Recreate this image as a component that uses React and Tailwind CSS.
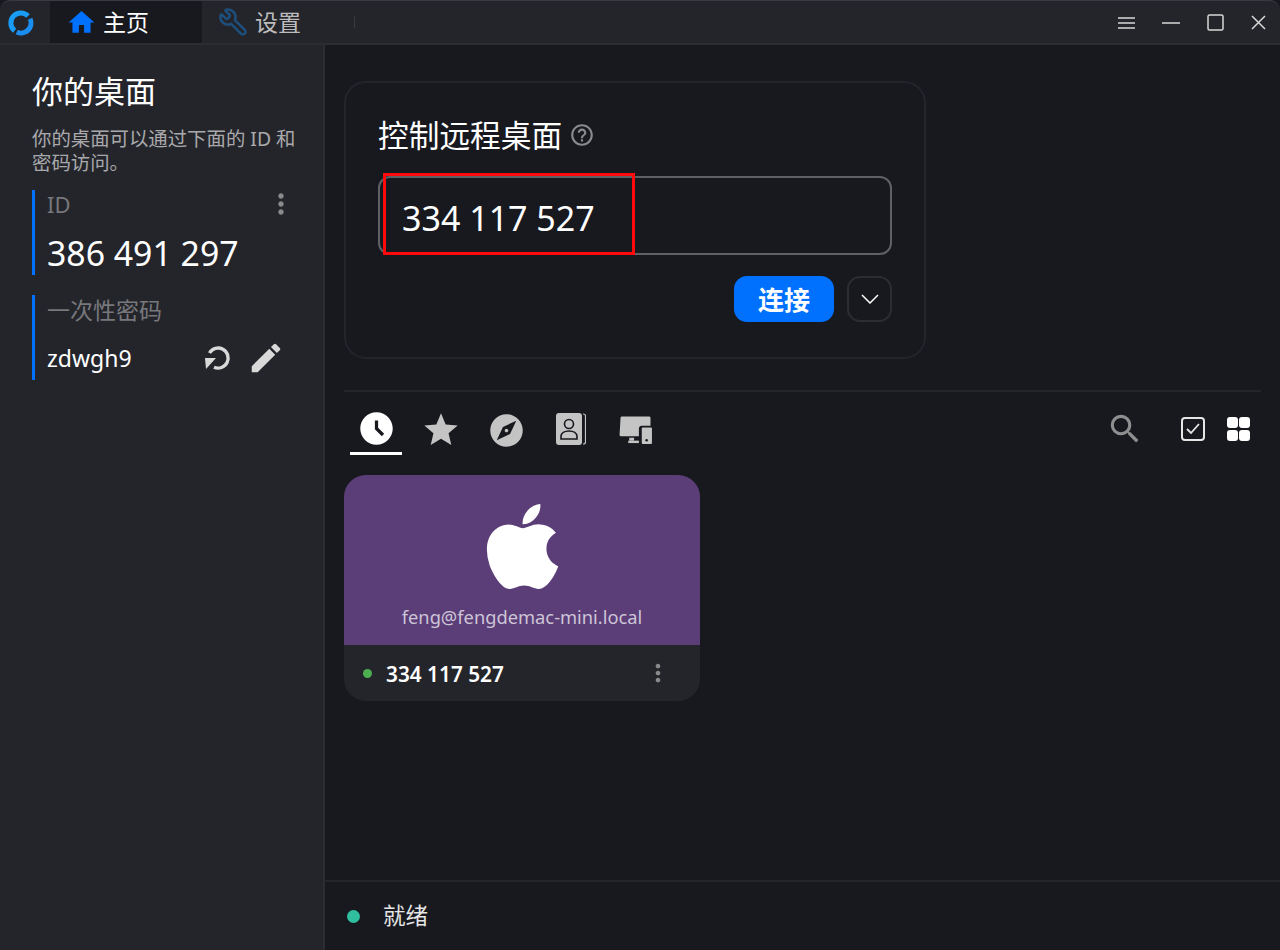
import { MdHome, MdAccessTimeFilled, MdStar, MdExplore, MdSearch, MdEdit, MdMoreVert, MdHelpOutline } from 'react-icons/md';
import { FaApple } from 'react-icons/fa';
import { Wrench } from 'lucide-react';

const font = { fontFamily: '"Noto Sans", "Noto Sans CJK SC", sans-serif' };

function Logo() {
  return (
    <svg width="28" height="28" viewBox="0 0 28 28" fill="none">
      <path d="M7.600 21.700 A10 10 0 1 1 21 6.900" stroke="#1a9cf5" strokeWidth="5" />
      <path d="M23.100 9.800 A10 10 0 0 1 9.800 23.100" stroke="#1a8df0" strokeWidth="5" />
    </svg>
  );
}

function RefreshIcon() {
  return (
    <svg width="28" height="28" viewBox="0 0 28 28" fill="none">
      <path d="M5.500 9 A10 10 0 1 1 10 23.200" stroke="#d9d9d9" strokeWidth="3.400" />
      <path d="M1 14 H12 L2 25 Z" fill="#d9d9d9" />
    </svg>
  );
}

function ContactIcon() {
  return (
    <svg width="30" height="34" viewBox="0 0 30 34">
      <rect x="0" y="1" width="26" height="32" rx="3" fill="#c4c4c4" />
      <path d="M27 2 h0.500 a2 2 0 0 1 2 2 v26 a2 2 0 0 1 -2 2 h-0.500" stroke="#c4c4c4" strokeWidth="1.200" fill="none" />
      <circle cx="13" cy="12" r="4.500" fill="none" stroke="#18191f" strokeWidth="1.600" />
      <path d="M5 27 v-2.500 c0-3.500 3.500-5.500 8-5.500 s8 2 8 5.500 v2.500 z" fill="none" stroke="#18191f" strokeWidth="1.600" />
    </svg>
  );
}

function DevicesIcon() {
  return (
    <svg width="34" height="29" viewBox="0 0 34 30">
      <path d="M1 2 a1.500 1.500 0 0 1 1.500-1.500 h28 a1.500 1.500 0 0 1 1.500 1.500 v8 h-9 a3 3 0 0 0 -3 3 v8 h-19 a1.500 1.500 0 0 1 -1 -1.500 z" fill="#c4c4c4" />
      <rect x="10" y="22.500" width="5" height="3" fill="#c4c4c4" />
      <rect x="9" y="25.500" width="11" height="2.500" fill="#c4c4c4" />
      <path d="M23 13 a1 1 0 0 1 1-1 h8.500 a1 1 0 0 1 1 1 v15 a1 1 0 0 1 -1 1 h-8.500 a1 1 0 0 1 -1 -1 z" fill="#c4c4c4" />
      <circle cx="28" cy="25" r="1.300" fill="#18191f" />
    </svg>
  );
}

function WindowButtons() {
  return (
    <div className="ml-auto flex items-center gap-[27px] pr-[14px] pt-[1px] text-[#d8d8d8]">
      <svg width="17" height="14" viewBox="0 0 17 14" stroke="currentColor" strokeWidth="1.500">
        <path d="M0 2h17M0 7h17M0 12h17" />
      </svg>
      <svg width="18" height="4" viewBox="0 0 18 4" stroke="currentColor" strokeWidth="1.500">
        <path d="M0 2h18" />
      </svg>
      <svg width="17" height="17" viewBox="0 0 17 17" fill="none" stroke="currentColor" strokeWidth="1.500">
        <rect x="1" y="1" width="15" height="15" rx="1.500" />
      </svg>
      <svg width="15" height="15" viewBox="0 0 15 15" stroke="currentColor" strokeWidth="1.500">
        <path d="M1 1l13 13M14 1L1 14" />
      </svg>
    </div>
  );
}

function Sidebar() {
  return (
    <aside className="w-[325px] shrink-0 border-r-2 border-[#2c2d33] bg-[#24252b] pl-[32px] pr-[28px] pt-[25px]">
      <h1 className="text-[31px] leading-[42px] text-white">你的桌面</h1>
      <div className="mt-[15px] -mr-[6px] text-[19.400px] leading-[24px] text-[#a9a9ab]">
        <p>你的桌面可以通过下面的 ID 和</p>
        <p>密码访问。</p>
      </div>
      <div className="mt-[15px] flex h-[85px] border-l-[3px] border-[#0071ff] pl-[12px]">
        <div className="flex-1">
          <div className="text-[22px] leading-[28px] text-[#77787c]">ID</div>
          <div className="mt-[15px] text-[33.800px] leading-[40px] text-white">386 491 297</div>
        </div>
        <MdMoreVert className="-mr-[2px] -mt-[2px] text-[#8a8a8d]" size={32} />
      </div>
      <div className="mt-[20px] flex h-[85px] flex-col border-l-[3px] border-[#0071ff] pl-[12px]">
        <div className="text-[23px] leading-[30px] text-[#77787c]">一次性密码</div>
        <div className="mt-[14px] flex items-center">
          <span className="flex-1 text-[23px] leading-[30px] text-white">zdwgh9</span>
          <RefreshIcon />
          <MdEdit className="ml-[15px] mr-[10px] text-[#d9d9d9]" size={38} />
        </div>
      </div>
    </aside>
  );
}

function ConnectPanel() {
  return (
    <section className="relative h-[278px] w-[582px] rounded-[22px] border-2 border-[#24252b] pl-[32px] pr-[32px] pt-[30px]">
      <div className="flex items-center gap-[7px]">
        <h2 className="text-[30.700px] leading-[44px] text-white">控制远程桌面</h2>
        <MdHelpOutline className="text-[#8a8a8d]" size={26} />
      </div>
      <div className="mt-[19px] flex h-[79px] items-center rounded-[12px] border-2 border-[#5f6064] pl-[22px] pt-[4px]">
        <span className="text-[34px] leading-[44px] text-white">334 117 527</span>
      </div>
      <div className="mt-[21px] flex justify-end gap-[13px]">
        <button className="h-[46px] w-[100px] rounded-[13px] bg-[#0071ff] text-[26px] font-bold leading-[48px] text-white">连接</button>
        <button className="flex h-[46px] w-[45px] items-center justify-center rounded-[13px] border-2 border-[#2c2d33] text-white">
          <svg width="18" height="10" viewBox="0 0 18 10" fill="none" stroke="currentColor" strokeWidth="1.500">
            <path d="M1 1l8 8 8-8" />
          </svg>
        </button>
      </div>
      {/* annotation drawn over the screenshot */}
      <div className="absolute left-[37px] top-[90px] h-[82px] w-[252px] border-[3px] border-[#ff0a0a]" />
    </section>
  );
}

function PeerTabs() {
  return (
    <div className="flex h-[66px] items-start pt-[21px]">
      <div className="ml-[6px] flex h-[42px] w-[52px] flex-col items-center border-b-[3px] border-white">
        <MdAccessTimeFilled className="-mt-[4px] text-white" size={39} />
      </div>
      <MdStar className="ml-[19px] -mt-[3px] text-[#c4c4c4]" size={40} />
      <MdExplore className="ml-[26px] -mt-[2px] text-[#c4c4c4]" size={39} />
      <div className="ml-[30px] -mt-[1px]"><ContactIcon /></div>
      <div className="ml-[33px] mt-[3px]"><DevicesIcon /></div>
      <MdSearch className="ml-auto -mt-[3px] text-[#8f8f91]" size={38} />
      <div className="ml-[37px] mt-[4px] flex h-[24px] w-[24px] items-center justify-center rounded-[4px] border-2 border-[#e6e6e6]">
        <svg width="14" height="12" viewBox="0 0 14 12" fill="none" stroke="#e6e6e6" strokeWidth="1.800">
          <path d="M1 6l4 4 8-9" />
        </svg>
      </div>
      <div className="ml-[22px] mr-[11px] mt-[4px] grid grid-cols-2 gap-[1.500px]">
        <span className="h-[11px] w-[11px] rounded-[3px] bg-white" />
        <span className="h-[11px] w-[11px] rounded-[3px] bg-white" />
        <span className="h-[11px] w-[11px] rounded-[3px] bg-white" />
        <span className="h-[11px] w-[11px] rounded-[3px] bg-white" />
      </div>
    </div>
  );
}

function PeerCard() {
  return (
    <div className="w-[356px] overflow-hidden rounded-[22px] bg-[#24252b]">
      <div className="flex h-[170px] flex-col items-center bg-[#5b3d78] pt-[23px]">
        <FaApple className="text-white" size={97} />
        <div className="mt-[8px] text-[18.300px] leading-[28px] text-[#cdc5d6]">feng@fengdemac-mini.local</div>
      </div>
      <div className="flex h-[56px] items-center pl-[19px] pr-[28px]">
        <span className="h-[9px] w-[9px] rounded-full bg-[#4caf50]" />
        <span className="ml-[14px] flex-1 pt-[3px] text-[20.800px] font-semibold text-white">334 117 527</span>
        <MdMoreVert className="text-[#8a8a8d]" size={28} />
      </div>
    </div>
  );
}

export default function App() {
  return (
    <div className="flex h-[950px] w-[1280px] flex-col overflow-hidden bg-[#18191f]" style={font}>
      <header className="flex h-[45px] shrink-0 items-center rounded-t-[10px] border-b-2 border-t border-[#2c2d33] border-t-[#3a3b42] bg-[#24252b]">
        <div className="flex w-[50px] justify-center pr-[8px] pt-[1px]"><Logo /></div>
        <div className="flex h-full w-[152px] items-center bg-[#18191f] pl-[16px]">
          <MdHome className="text-[#0071ff]" size={31} />
          <span className="ml-[6px] text-[23px] text-white">主页</span>
        </div>
        <div className="flex h-full items-center pl-[16px]">
          <Wrench className="-scale-x-100 text-[#1d4f7c]" size={30} strokeWidth={2} />
          <span className="ml-[7px] text-[23px] text-[#bcbcbd]">设置</span>
        </div>
        <span className="ml-[53px] h-[12px] w-px bg-[#3a3b40]" />
        <WindowButtons />
      </header>
      <div className="flex min-h-0 flex-1">
        <Sidebar />
        <main className="flex min-w-0 flex-1 flex-col">
          <div className="flex-1 pl-[19px] pr-[19px] pt-[36px]">
            <ConnectPanel />
            <div className="mt-[31px] border-t-2 border-[#24252b]">
              <PeerTabs />
              <div className="mt-[17px]"><PeerCard /></div>
            </div>
          </div>
          <footer className="flex h-[70px] items-center border-t-2 border-[#24252b] pl-[22px]">
            <span className="h-[13px] w-[13px] rounded-full bg-[#2fbf9f]" />
            <span className="ml-[23px] text-[22.500px] text-[#e6e6e6]">就绪</span>
          </footer>
        </main>
      </div>
    </div>
  );
}
